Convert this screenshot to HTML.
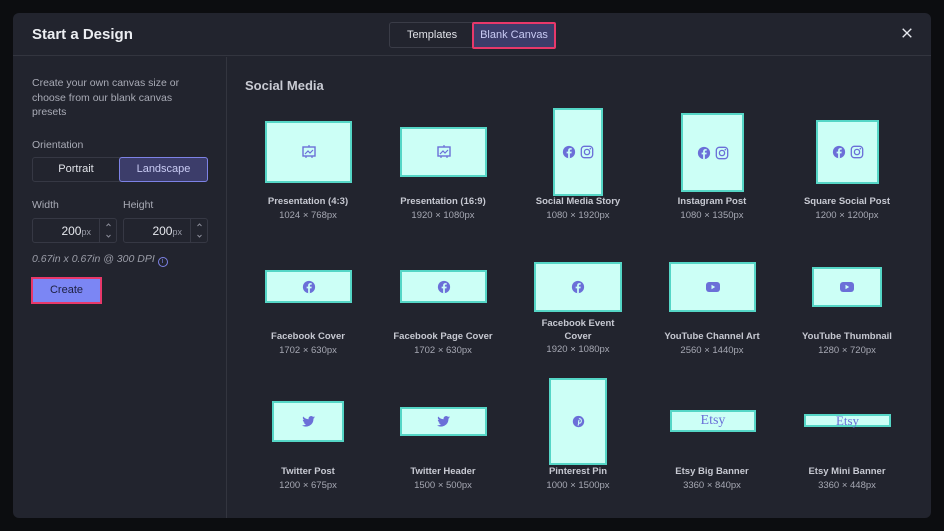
<!DOCTYPE html>
<html><head><meta charset="utf-8"><style>
*{box-sizing:border-box;margin:0;padding:0}
body{width:944px;height:531px;background:#0c0d10;font-family:"Liberation Sans",sans-serif;position:relative;overflow:hidden}
.modal{position:absolute;left:13px;top:13px;width:918px;height:505px;background:#22242e;border-radius:6px;overflow:hidden}
.hdr{position:absolute;left:0;top:0;width:918px;height:43px;border-bottom:1px solid #33353f}
.title{position:absolute;left:19px;top:13px;color:#eceef2;font-size:15px;font-weight:bold}
.tabs{position:absolute;left:376px;top:9px;height:26px;width:166px;border:1px solid #3a3c47;border-radius:3px}
.tab1{position:absolute;left:17px;top:6px;font-size:11px;color:#e0e2e8}
.tab2{position:absolute;left:82px;top:-1px;width:84px;height:27px;background:#3c3d6a;border:2px solid #e8386a;border-radius:2px;color:#c9cbf4;font-size:11px;text-align:center;line-height:23px}
.x{position:absolute;right:18px;top:14px;width:12px;height:12px}
.left{position:absolute;left:0;top:44px;width:214px;height:461px;border-right:1px solid #33353f}
.t{position:absolute;color:#a9abb6;font-size:10.5px}
.seg{position:absolute;left:19px;top:144px;width:176px;height:25px;border:1px solid #363844;border-radius:3px}
.inp{position:absolute;top:205px;width:85px;height:25px;border:1px solid #363844;border-radius:3px;color:#e6e8ee;font-size:12px}
.step{position:absolute;right:0;top:0;width:17px;height:23px;border-left:1px solid #363844}
.create{position:absolute;left:18px;top:264px;width:71px;height:27px;background:#7b86f4;border:2px solid #e8386a;color:#1d2040;font-size:11px;text-align:center;line-height:23px}
.sm{position:absolute;left:232px;top:65px;color:#c9cbd3;font-size:13px;font-weight:bold}
.th{position:absolute;background:#ccfff6;border:2px solid #55d6c6;display:flex;align-items:center;justify-content:center;gap:4px}
.lb{position:absolute;width:130px;text-align:center;font-size:9.5px;line-height:14px;color:#c7c9d2;font-weight:bold}
.lb span{display:block;font-weight:normal;color:#a6a8b3}
svg{display:block}
</style></head><body>
<div class="modal">
<div class="hdr">
<div class="title">Start a Design</div>
<div class="tabs"><div class="tab1">Templates</div><div class="tab2">Blank Canvas</div></div>
<svg class="x" viewBox="0 0 14 14"><path d="M2 2L12 12M12 2L2 12" stroke="#e6e8ee" stroke-width="1.6"/></svg>
</div>
<div class="left">
<div class="t" style="left:19px;top:19px;line-height:14.5px;width:170px">Create your own canvas size or choose from our blank canvas presets</div>
<div class="t" style="left:19px;top:82px">Orientation</div>
</div>
<div class="seg"></div>
<div style="position:absolute;left:19px;top:144px;width:88px;height:25px;color:#e0e2e8;font-size:11px;text-align:center;line-height:25px">Portrait</div>
<div style="position:absolute;left:106px;top:144px;width:89px;height:25px;background:#3c3d6a;border:1px solid #7d82e6;border-radius:3px;color:#c9cbf4;font-size:11px;text-align:center;line-height:23px">Landscape</div>
<div class="t" style="left:19px;top:186px">Width</div>
<div class="t" style="left:110px;top:186px">Height</div>
<div class="inp" style="left:19px"><span style="position:absolute;right:25px;top:5px">200<small style="font-size:9px;color:#9a9ca8">px</small></span><div class="step"><svg width="17" height="23" viewBox="0 0 17 23"><path d="M6.5 7l2-2 2 2M6.5 16l2 2 2-2" stroke="#8a8c98" fill="none"/></svg></div></div>
<div class="inp" style="left:110px"><span style="position:absolute;right:25px;top:5px">200<small style="font-size:9px;color:#9a9ca8">px</small></span><div class="step"><svg width="17" height="23" viewBox="0 0 17 23"><path d="M6.5 7l2-2 2 2M6.5 16l2 2 2-2" stroke="#8a8c98" fill="none"/></svg></div></div>
<div class="t" style="left:19px;top:240px;font-style:italic;color:#9b9da8">0.67in x 0.67in @ 300 DPI <span style="display:inline-block;width:10px;height:10px;border:1px solid #7d82e6;border-radius:50%;font-size:7px;color:#7d82e6;text-align:center;line-height:8px;font-style:normal;vertical-align:-1px">i</span></div>
<div class="create">Create</div>
<div class="sm">Social Media</div>
</div>

<svg width="0" height="0" style="position:absolute"><defs>
<symbol id="pres" viewBox="0 0 16 16"><rect x="2" y="3" width="12" height="9" fill="none" stroke="#6b6fd8" stroke-width="1.4"/><path d="M4 10l3-3 2 2 3-3M8 1v2M5 12v2M11 12v2" stroke="#6b6fd8" stroke-width="1.2" fill="none"/></symbol>
<symbol id="fb" viewBox="0 0 16 16"><circle cx="8" cy="8" r="7" fill="#6b6fd8"/><path d="M9 15V9.5h1.8l.3-2H9V6.3c0-.6.2-1 1-1h1.1V3.6c-.3 0-.9-.1-1.6-.1C8 3.5 7 4.4 7 6v1.5H5.3v2H7V15z" fill="#ccfff6"/></symbol>
<symbol id="ig" viewBox="0 0 16 16"><rect x="1.5" y="1.5" width="13" height="13" rx="3.5" fill="none" stroke="#6b6fd8" stroke-width="1.5"/><circle cx="8" cy="8" r="3" fill="none" stroke="#6b6fd8" stroke-width="1.5"/><circle cx="11.8" cy="4.2" r=".9" fill="#6b6fd8"/></symbol>
<symbol id="yt" viewBox="0 0 16 16"><rect x="1" y="3" width="14" height="10" rx="3" fill="#6b6fd8"/><path d="M6.5 5.8v4.4L10.2 8z" fill="#ccfff6"/></symbol>
<symbol id="tw" viewBox="0 0 16 16"><path d="M15 3.5c-.5.2-1 .4-1.6.4.6-.3 1-.9 1.2-1.5-.5.3-1.1.5-1.700.7A2.8 2.8 0 0 0 8.1 5.6 8 8 0 0 1 2.3 2.7a2.8 2.8 0 0 0 .9 3.7c-.5 0-.9-.1-1.3-.3 0 1.400 1 2.500 2.200 2.800-.4.1-.8.1-1.3 0 .4 1.100 1.400 1.900 2.600 2A5.6 5.6 0 0 1 1 12.1 8 8 0 0 0 13.3 5.3v-.4c.7-.4 1.200-.9 1.700-1.400z" fill="#6b6fd8"/></symbol>
<symbol id="pin" viewBox="0 0 16 16"><circle cx="8" cy="8" r="7" fill="#6b6fd8"/><path d="M7.5 13l1-4.2M8.5 4.5c2 0 3 1.2 3 2.6 0 1.8-1 3-2.3 3-.9 0-1.4-.7-1.2-1.5.3-1 .6-2 .6-2.6" stroke="#ccfff6" stroke-width="1.3" fill="none"/></symbol>
</defs></svg>

<div class="th" style="left:265px;top:121px;width:87px;height:62px"><svg width="16" height="16"><use href="#pres"/></svg></div>
<div class="th" style="left:400px;top:127px;width:87px;height:50px"><svg width="16" height="16"><use href="#pres"/></svg></div>
<div class="th" style="left:553px;top:108px;width:50px;height:88px"><svg width="14" height="14"><use href="#fb"/></svg><svg width="14" height="14"><use href="#ig"/></svg></div>
<div class="th" style="left:681px;top:113px;width:63px;height:79px"><svg width="14" height="14"><use href="#fb"/></svg><svg width="14" height="14"><use href="#ig"/></svg></div>
<div class="th" style="left:816px;top:120px;width:63px;height:64px"><svg width="14" height="14"><use href="#fb"/></svg><svg width="14" height="14"><use href="#ig"/></svg></div>

<div class="th" style="left:265px;top:270px;width:87px;height:33px"><svg width="14" height="14"><use href="#fb"/></svg></div>
<div class="th" style="left:400px;top:270px;width:87px;height:33px"><svg width="14" height="14"><use href="#fb"/></svg></div>
<div class="th" style="left:534px;top:262px;width:88px;height:50px"><svg width="14" height="14"><use href="#fb"/></svg></div>
<div class="th" style="left:669px;top:262px;width:87px;height:50px"><svg width="16" height="16"><use href="#yt"/></svg></div>
<div class="th" style="left:812px;top:267px;width:70px;height:40px"><svg width="16" height="16"><use href="#yt"/></svg></div>

<div class="th" style="left:272px;top:401px;width:72px;height:41px"><svg width="15" height="15"><use href="#tw"/></svg></div>
<div class="th" style="left:400px;top:407px;width:87px;height:29px"><svg width="15" height="15"><use href="#tw"/></svg></div>
<div class="th" style="left:549px;top:378px;width:58px;height:87px"><svg width="13" height="13"><use href="#pin"/></svg></div>
<div class="th" style="left:670px;top:410px;width:86px;height:22px;font-family:'Liberation Serif',serif;color:#6b6fd8;font-size:14px">Etsy</div>
<div class="th" style="left:804px;top:414px;width:87px;height:13px;font-family:'Liberation Serif',serif;color:#6b6fd8;font-size:13px;line-height:10px">Etsy</div>

<div class="lb" style="left:243px;top:195px">Presentation (4:3)<span>1024 × 768px</span></div>
<div class="lb" style="left:378px;top:195px">Presentation (16:9)<span>1920 × 1080px</span></div>
<div class="lb" style="left:513px;top:195px">Social Media Story<span>1080 × 1920px</span></div>
<div class="lb" style="left:647px;top:195px">Instagram Post<span>1080 × 1350px</span></div>
<div class="lb" style="left:782px;top:195px">Square Social Post<span>1200 × 1200px</span></div>

<div class="lb" style="left:243px;top:330px">Facebook Cover<span>1702 × 630px</span></div>
<div class="lb" style="left:378px;top:330px">Facebook Page Cover<span>1702 × 630px</span></div>
<div class="lb" style="left:513px;top:318px;line-height:12.5px">Facebook Event<br>Cover<span style="line-height:14px">1920 × 1080px</span></div>
<div class="lb" style="left:647px;top:330px">YouTube Channel Art<span>2560 × 1440px</span></div>
<div class="lb" style="left:782px;top:330px">YouTube Thumbnail<span>1280 × 720px</span></div>

<div class="lb" style="left:243px;top:465px">Twitter Post<span>1200 × 675px</span></div>
<div class="lb" style="left:378px;top:465px">Twitter Header<span>1500 × 500px</span></div>
<div class="lb" style="left:513px;top:465px">Pinterest Pin<span>1000 × 1500px</span></div>
<div class="lb" style="left:647px;top:465px">Etsy Big Banner<span>3360 × 840px</span></div>
<div class="lb" style="left:782px;top:465px">Etsy Mini Banner<span>3360 × 448px</span></div>
</body></html>
